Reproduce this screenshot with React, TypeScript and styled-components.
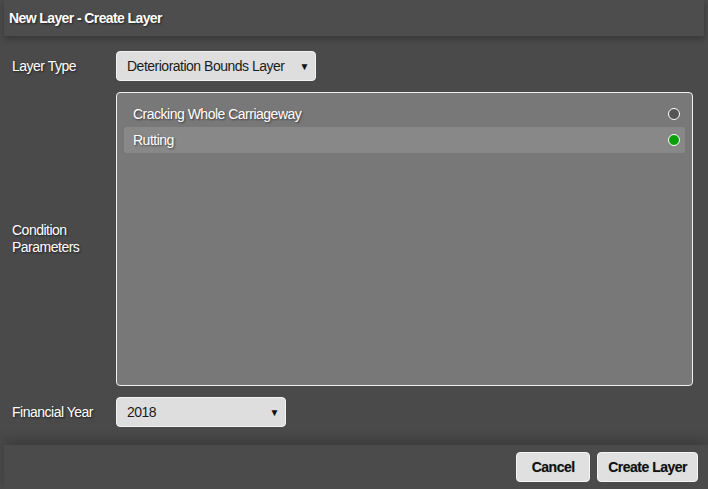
import styled, { createGlobalStyle } from "styled-components";

// ── Styles ────────────────────────────────────────────────────────────────────

const GlobalStyle = createGlobalStyle`
  html, body {
    margin: 0;
    padding: 0;
    background: #4a4a4a;
  }
  body {
    font-family: "Liberation Sans", Arial, sans-serif;
  }
`;

const Dialog = styled.div`
  width: 708px;
  height: 489px;
  display: flex;
  flex-direction: column;
  background: #4a4a4a;
  overflow: hidden;
`;

const Header = styled.div`
  height: 36px;
  margin: 0 4px;
  padding: 0 5px;
  display: flex;
  align-items: center;
  background: #4d4d4d;
  box-shadow: 0 3px 6px rgba(0, 0, 0, 0.25);
  flex-shrink: 0;
`;

const Title = styled.span`
  font-size: 14px;
  font-weight: 700;
  letter-spacing: -0.6px;
  color: #fff;
  text-shadow: 1px 1px 2px rgba(0, 0, 0, 0.6);
`;

const Body = styled.div`
  flex: 1;
  padding: 15px 15px 0 12px;
  display: flex;
  flex-direction: column;
  gap: 11px;
`;

const Row = styled.div<{ $grow?: boolean }>`
  display: flex;
  align-items: center;
  ${({ $grow }) => ($grow ? "height: 294px;" : "")}
`;

const Label = styled.div`
  width: 104px;
  flex-shrink: 0;
  font-size: 14px;
  letter-spacing: -0.5px;
  line-height: 17px;
  color: #fff;
  text-shadow: 1px 1px 2px rgba(0, 0, 0, 0.6);
`;

const Select = styled.div<{ $width: number }>`
  width: ${({ $width }) => $width}px;
  height: 30px;
  box-sizing: border-box;
  padding: 0 6px 0 10px;
  display: flex;
  align-items: center;
  justify-content: space-between;
  background: #dedede;
  border: 1px solid #f2f2f2;
  border-radius: 4px;
  font-size: 14px;
  letter-spacing: -0.5px;
  color: #1c1c1c;
`;

const Caret = styled.span`
  font-size: 10px;
  color: #111;
`;

const ListBox = styled.div`
  flex: 1;
  align-self: stretch;
  box-sizing: border-box;
  padding: 8px 7px;
  display: flex;
  flex-direction: column;
  background: #787878;
  border: 1px solid #f0f0f0;
  border-radius: 4px;
`;

const ListItem = styled.div<{ $selected: boolean }>`
  height: 26px;
  padding: 0 5px 0 9px;
  display: flex;
  align-items: center;
  justify-content: space-between;
  border-radius: 3px;
  background: ${({ $selected }) => ($selected ? "#888888" : "transparent")};
  font-size: 14px;
  letter-spacing: -0.5px;
  color: #fff;
  text-shadow: 1px 1px 2px rgba(0, 0, 0, 0.5);
`;

const Radio = styled.span<{ $on: boolean }>`
  width: 10px;
  height: 10px;
  border-radius: 50%;
  border: 1px solid #fff;
  background: ${({ $on }) => ($on ? "#0a9e0a" : "#555555")};
`;

const Footer = styled.div`
  height: 44px;
  margin: 10px 0 0 4px;
  padding: 0 10px;
  display: flex;
  align-items: center;
  justify-content: flex-end;
  gap: 7px;
  background: #4b4b4b;
  box-shadow: 0 -6px 10px rgba(0, 0, 0, 0.18);
  flex-shrink: 0;
`;

const Button = styled.button`
  height: 30px;
  min-width: 74px;
  padding: 0 10px;
  background: #e0e0e0;
  border: 1px solid #f4f4f4;
  border-radius: 4px;
  font-family: "Liberation Sans", Arial, sans-serif;
  font-size: 14px;
  font-weight: 700;
  letter-spacing: -0.5px;
  color: #111;
  text-shadow: 0 0 1px rgba(0, 0, 0, 0.3);
  cursor: pointer;
`;

// ── Data ──────────────────────────────────────────────────────────────────────

const parameters = [
  { name: "Cracking Whole Carriageway", selected: false },
  { name: "Rutting", selected: true },
];

// ── Component ─────────────────────────────────────────────────────────────────

export default function App() {
  return (
    <>
      <GlobalStyle />
      <Dialog>
        <Header>
          <Title>New Layer - Create Layer</Title>
        </Header>

        <Body>
          <Row>
            <Label>Layer Type</Label>
            <Select $width={200}>
              <span>Deterioration Bounds Layer</span>
              <Caret>▼</Caret>
            </Select>
          </Row>

          <Row $grow>
            <Label>
              Condition
              <br />
              Parameters
            </Label>
            <ListBox>
              {parameters.map((p) => (
                <ListItem key={p.name} $selected={p.selected}>
                  <span>{p.name}</span>
                  <Radio $on={p.selected} />
                </ListItem>
              ))}
            </ListBox>
          </Row>

          <Row>
            <Label>Financial Year</Label>
            <Select $width={170}>
              <span>2018</span>
              <Caret>▼</Caret>
            </Select>
          </Row>
        </Body>

        <Footer>
          <Button>Cancel</Button>
          <Button>Create Layer</Button>
        </Footer>
      </Dialog>
    </>
  );
}
